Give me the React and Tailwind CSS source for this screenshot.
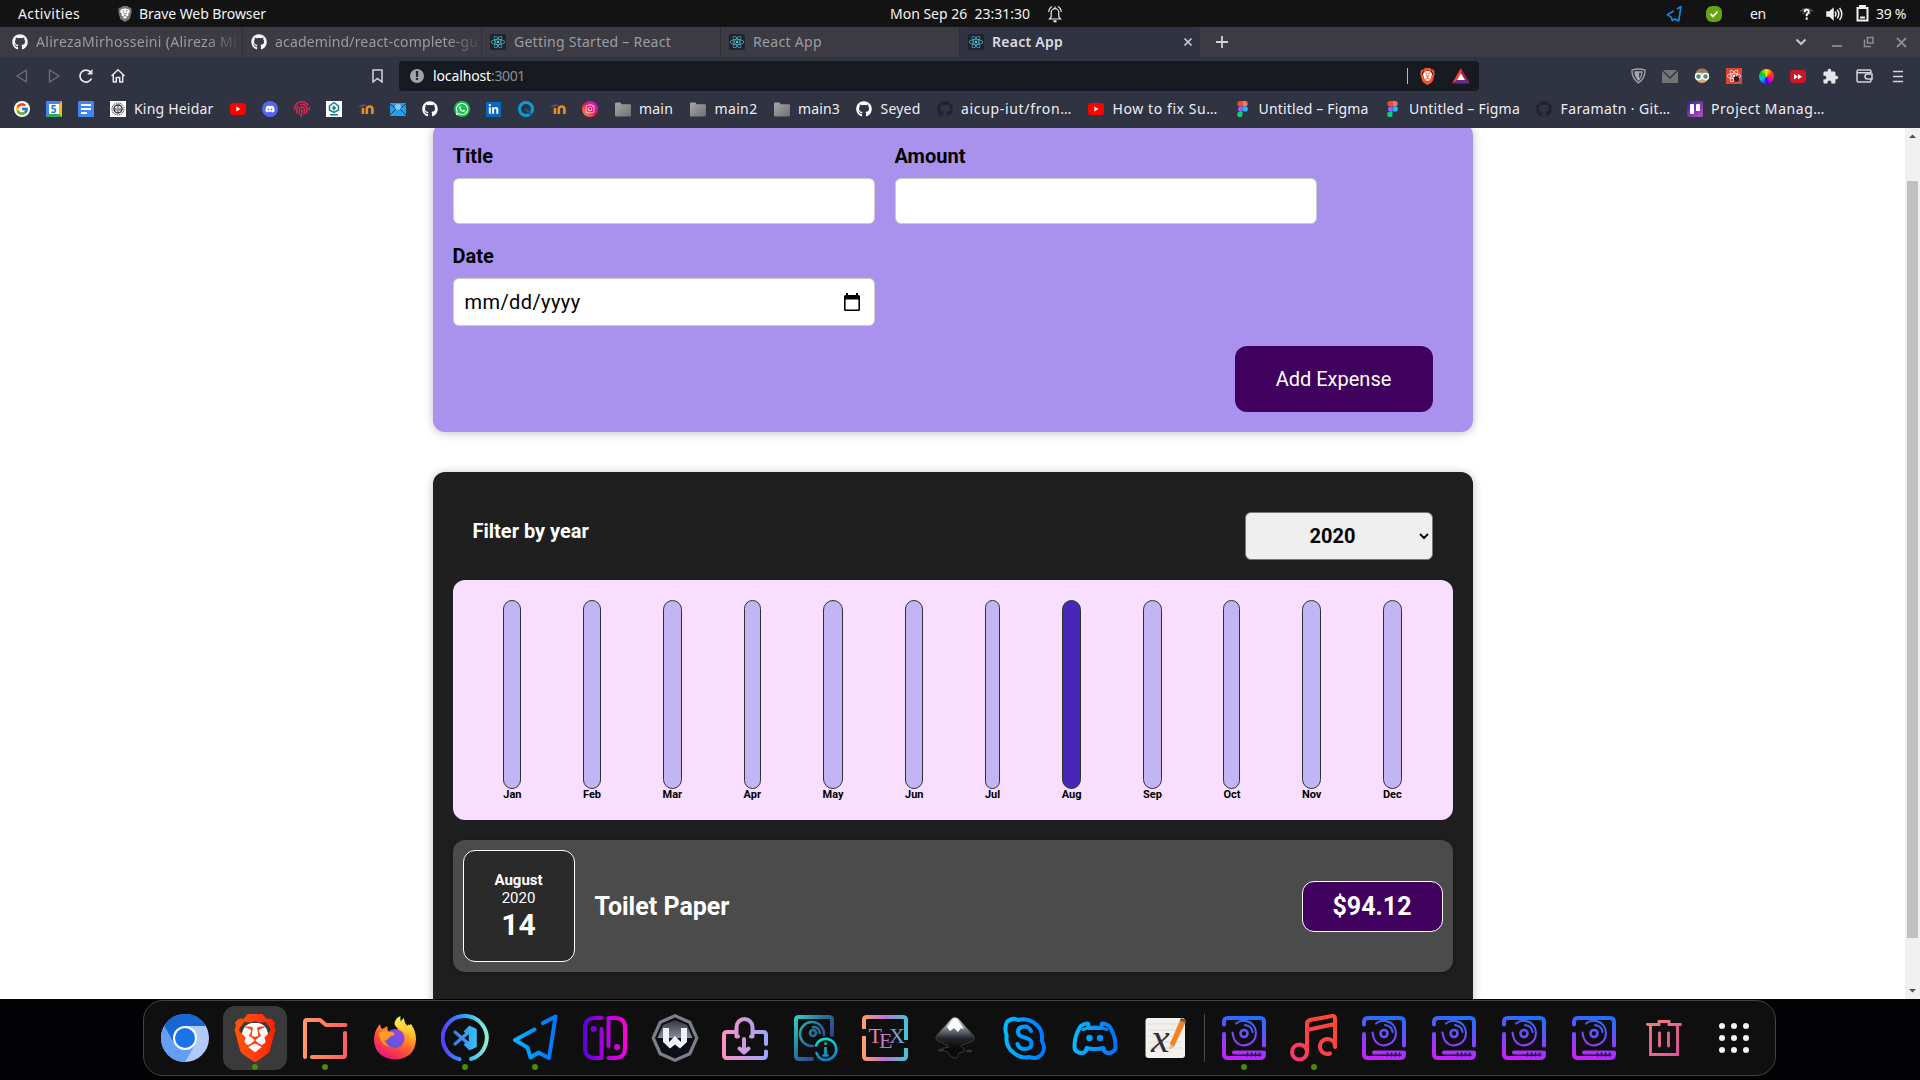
import React, { useLayoutEffect, useRef } from "react";
import {
  FaGithub, FaReact, FaDiscord, FaWhatsapp, FaLinkedinIn, FaInstagram,
  FaFingerprint,
} from "react-icons/fa";
import { MdExtension } from "react-icons/md";
import { FcGoogle } from "react-icons/fc";
import { SiBrave } from "react-icons/si";

const UI = "font-['Noto_Sans',sans-serif] text-[14px] leading-5";

/* Single-line text that spreads its letters to fill a given width. */
function Fit({ w, className = "", children }) {
  const ref = useRef(null);
  useLayoutEffect(() => {
    const el = ref.current;
    el.style.letterSpacing = "0px";
    const natural = el.getBoundingClientRect().width;
    el.style.letterSpacing = (w - natural) / el.textContent.length + "px";
  }, [w]);
  return (
    <span className={"block shrink-0 whitespace-pre " + className} style={{ width: w }}>
      <span ref={ref} className="inline-block">{children}</span>
    </span>
  );
}

function Cell({ className = "w-8", children }) {
  return <div className={"flex shrink-0 items-center justify-center " + className}>{children}</div>;
}

/* ---------- shared gradients ---------- */
function Defs() {
  const g = (id, x1, y1, x2, y2, stops) => (
    <linearGradient id={id} gradientUnits="userSpaceOnUse" x1={x1} y1={y1} x2={x2} y2={y2}>
      {stops.map(([o, c]) => <stop key={o} offset={o} stopColor={c} />)}
    </linearGradient>
  );
  return (
    <svg className="absolute h-0 w-0">
      <defs>
        {g("folder", 2, 0, 46, 0, [[0, "#ff9966"], [1, "#ff5e62"]])}
        {g("code", 2, 0, 46, 0, [[0, "#5a3fff"], [0.5, "#20aaff"], [1, "#8ff2cf"]])}
        {g("ribbon", 12, 0, 37, 0, [[0, "#3f74f0"], [1, "#35c8f8"]])}
        {g("plane", 2, 0, 40, 0, [[0, "#00b8ff"], [1, "#0078ff"]])}
        {g("joy", 2, 0, 46, 0, [[0, "#5a00dc"], [1, "#ff00e0"]])}
        {g("bag", 2, 0, 46, 0, [[0, "#ff8fc0"], [1, "#9aa8ff"]])}
        {g("info", 2, 2, 42, 30, [[0, "#30d8d0"], [0.5, "#28789a"], [1, "#33318a"]])}
        {g("infoI", 30, 24, 34, 46, [[0, "#10e0c8"], [1, "#1080c8"]])}
        {g("tex", 2, 0, 46, 0, [[0, "#ffa060"], [0.5, "#c070d8"], [1, "#40c8d8"]])}
        {g("blue", 2, 0, 46, 0, [[0, "#00bfff"], [1, "#0070ff"]])}
        {g("drive", 30, 2, 20, 46, [[0, "#2070ff"], [0.5, "#7a48ff"], [1, "#c820ff"]])}
        {g("music", 2, 40, 46, 2, [[0, "#ff3868"], [1, "#ff4a28"]])}
        {g("trash", 6, 8, 42, 40, [[0, "#f08080"], [1, "#e850a0"]])}
        {g("ink", 24, 2, 24, 34, [[0, "#ffffff"], [0.35, "#8a8e98"], [0.7, "#22252c"], [1, "#0a0a0a"]])}
        {g("hex", 24, 6, 24, 24, [[0, "#333640"], [1, "#8a8c96"]])}
        {g("bravefill", 2, 0, 22, 0, [[0, "#ff5500"], [0.5, "#ff4010"], [1, "#ff2000"]])}
        {g("fox", 38, 6, 14, 46, [[0, "#fff04a"], [0.3, "#ffa62a"], [0.65, "#ff4a38"], [1, "#e6108a"]])}
        {g("foxtail", 34, 3, 34, 34, [[0, "#fff45a"], [0.5, "#ffc830"], [1, "#ff8a20"]])}
        {g("foxhead", 6, 14, 24, 30, [[0, "#ffb030"], [1, "#ff8020"]])}
        {g("orb", 30, 14, 18, 32, [[0, "#a040e8"], [1, "#5a58d8"]])}
        <linearGradient id="foldergray" x1="0" y1="0" x2="1" y2="1">
          <stop offset="0" stopColor="#a8a8aa" /><stop offset="1" stopColor="#707074" />
        </linearGradient>
      </defs>
    </svg>
  );
}

function Brave({ className, fill = "#fb542b" }) {
  return (
    <div className={"relative " + className}>
      <div className="absolute inset-x-[22%] inset-y-[18%] rounded-[40%] bg-white" />
      <SiBrave className="relative h-full w-full" fill={fill} />
    </div>
  );
}

/* ---------- GNOME top bar ---------- */
function TopBar() {
  return (
    <div className={"flex h-[27px] shrink-0 items-center bg-[#131313] text-[#f2f2f2] " + UI}>
      <Fit w={62} className="ml-[18px]">Activities</Fit>
      <div className="relative ml-[37px] h-[18px] w-[16px]">
        <div className="absolute inset-x-[3px] inset-y-[3px] rounded bg-white" />
        <SiBrave className="relative h-[18px] w-[16px]" fill="#77777a" />
      </div>
      <Fit w={127} className="ml-[6px]">Brave Web Browser</Fit>
      <Fit w={140} className="ml-[624px]">Mon Sep 26  23:31:30</Fit>
      <svg className="ml-[17px]" width="16" height="18" viewBox="0 0 16 18" fill="none" stroke="#eee" strokeWidth="1.2">
        <path d="M2.500 14h11l-1.700-2V7.500a3.800 3.800 0 0 0-7.600 0V12zM1.800 7q.2-4 3.400-5.500M14.200 7q-.2-4-3.400-5.500M8 1.500v2" />
        <path d="M6.500 16.300h3" strokeWidth="2" />
      </svg>
      <svg className="ml-[603px]" width="16" height="16" viewBox="0 0 48 48" fill="none" stroke="#1685ea" strokeWidth="5" strokeLinejoin="round">
        <path d="M33 9L45 2 38 45 27 39 19 44 16 34 4 26 23 15" />
      </svg>
      <div className="ml-[24px] flex h-4 w-4 items-center justify-center rounded-[6px] bg-[#63a411]">
        <svg width="10" height="10" viewBox="0 0 10 10" fill="none" stroke="#fff" strokeWidth="1.8"><path d="M1.5 5l2.5 2.5 4.500-5" /></svg>
      </div>
      <Fit w={16} className="ml-[28px]">en</Fit>
      <svg className="ml-[33px]" width="15" height="14" viewBox="0 0 15 14" fill="none">
        <path d="M1 4.500Q7.500-1.500 14 4.500M3.500 7Q7.500 3 11.500 7" stroke="#555" strokeWidth="1.6" />
        <path d="M5.500 5q0-2.200 2.200-2.200T9.800 4.900q0 1.400-2.100 2.600v1.700M7.700 10.500v2.200" stroke="#fff" strokeWidth="1.9" />
      </svg>
      <svg className="ml-[12px]" width="17" height="14" viewBox="0 0 17 14" fill="none" stroke="#eee" strokeWidth="1.5">
        <path d="M1 5h2.500L7 2v10L3.500 9H1z" fill="#eee" /><path d="M9 4.500q1.800 2.500 0 5M11.300 2.800q3 4.200 0 8.400M13.600 1q4.400 6 0 12" />
      </svg>
      <svg className="ml-[13px]" width="13" height="17" viewBox="0 0 13 17" fill="none" stroke="#f2f2f2" strokeWidth="2">
        <path d="M4 2.500V1h5v1.500M1.500 3h10v12.500h-10zM4 12.500h5" />
      </svg>
      <Fit w={30} className="ml-[7px]">39 %</Fit>
    </div>
  );
}

/* ---------- Browser tabs ---------- */
const tabs = [
  { icon: "gh", label: "AlirezaMirhosseini (Alireza Mi", w: 201, fade: true },
  { icon: "gh", label: "academind/react-complete-gu", w: 203, fade: true },
  { icon: "react", label: "Getting Started – React", w: 157 },
  { icon: "react", label: "React App", w: 69 },
  { icon: "react", label: "React App", w: 71, active: true },
];

function TabBar() {
  return (
    <div className={"flex h-[30px] shrink-0 bg-[#3c3b43] pl-1 " + UI}>
      {tabs.map((t, i) => (
        <div
          key={i}
          className={
            t.active
              ? "flex w-[240px] items-center rounded-t-[4px] bg-[#303342] pl-2 font-semibold text-[#dcdce2]"
              : "flex w-[239px] items-center border-r border-[#302f35] pl-2 text-[#9c9ba3]"
          }
        >
          {t.icon === "gh" ? (
            <FaGithub className="h-4 w-4 shrink-0 text-[#f4f4f6]" />
          ) : (
            <div className="flex h-4 w-4 shrink-0 items-center justify-center rounded-[2px] bg-[#20232a]">
              <FaReact className="h-[14px] w-[14px] text-[#53c1de]" />
            </div>
          )}
          <div className={t.fade ? "ml-2 [mask-image:linear-gradient(to_right,black_85%,rgba(0,0,0,0.12))]" : "ml-2"}>
            <Fit w={t.w}>{t.label}</Fit>
          </div>
          {t.active && (
            <svg className="ml-[120px]" width="10" height="10" viewBox="0 0 10 10" stroke="#c8c8cf" strokeWidth="1.7"><path d="M1.500 1.500l7 7M8.500 1.500l-7 7" /></svg>
          )}
        </div>
      ))}
      <div className="flex flex-1 items-center">
        <svg className="ml-[16px]" width="12" height="12" viewBox="0 0 12 12" stroke="#d2d2d8" strokeWidth="1.8"><path d="M6 0v12M0 6h12" /></svg>
        <svg className="ml-[567px]" width="12" height="8" viewBox="0 0 12 8" fill="none" stroke="#c8c8cc" strokeWidth="2"><path d="M1.500 1.500L6 6l4.500-4.500" /></svg>
        <svg className="ml-[24px]" width="12" height="10" viewBox="0 0 12 10" stroke="#8c8b91" strokeWidth="1.800"><path d="M1 9h10" /></svg>
        <svg className="ml-[20px]" width="12" height="12" viewBox="0 0 12 12" fill="none" stroke="#8c8b91" strokeWidth="1.500"><path d="M4.500 1.500H10v5.500H4.500zM1.500 3.500v7h6.500" /></svg>
        <svg className="ml-[21px]" width="11" height="11" viewBox="0 0 11 11" stroke="#8c8b91" strokeWidth="1.800"><path d="M1 1l9 9M10 1l-9 9" /></svg>
      </div>
    </div>
  );
}

/* ---------- Address bar ---------- */
function Toolbar() {
  return (
    <div className={"flex h-[38px] shrink-0 items-center bg-[#303342] pl-[6px] " + UI}>
      <Cell><svg width="12" height="14" viewBox="0 0 12 14" fill="none" stroke="#6d6f7c" strokeWidth="1.300" strokeLinejoin="round"><path d="M10.500 1v12L1 7z" /></svg></Cell>
      <Cell><svg width="12" height="14" viewBox="0 0 12 14" fill="none" stroke="#6d6f7c" strokeWidth="1.300" strokeLinejoin="round"><path d="M1.500 1v12L11 7z" /></svg></Cell>
      <Cell><svg width="16" height="16" viewBox="0 0 16 16" fill="none" stroke="#e8e8ec" strokeWidth="1.700"><path d="M13.500 10.500a6 6 0 1 1-.8-6.200" /><path d="M14.500 1v5.500H9z" fill="#e8e8ec" stroke="none" /></svg></Cell>
      <Cell><svg width="16" height="16" viewBox="0 0 16 16" fill="none" stroke="#e8e8ec" strokeWidth="1.500" strokeLinejoin="round"><path d="M1.500 8L8 1.800 14.500 8M3.300 7v7h3V9.500h3.400V14h3V7" /></svg></Cell>
      <div className="ml-[226px] w-[39px]">
        <svg className="ml-[12px]" width="11" height="14" viewBox="0 0 11 14" fill="none" stroke="#d2d2d8" strokeWidth="1.500"><path d="M1 1h9v12L5.500 9.500 1 13z" /></svg>
      </div>
      <div className="flex h-[30px] w-[1080px] shrink-0 items-center rounded bg-[#181a21]">
        <div className="ml-[11px] flex h-[14px] w-[14px] items-center justify-center rounded-full bg-[#a2a4ad] text-[12px] font-extrabold text-[#181a21]">!</div>
        <Fit w={58} className="ml-[9px] text-white">localhost</Fit>
        <Fit w={34} className="text-[#8b8d98]">:3001</Fit>
        <div className="ml-[882px] h-4 w-px bg-[#b8b9be]" />
        <Brave className="ml-[11px] h-[17px] w-[17px]" />
        <svg className="ml-[16px]" width="18" height="16" viewBox="0 0 18 16"><path d="M9 0L0 15.500 9 10z" fill="#ff4724" /><path d="M9 0l9 15.500L9 9z" fill="#9e1f63" /><path d="M0 15.500h18L9 9z" fill="#662d91" /><path d="M9 5.500L5 12h8z" fill="#fff" /></svg>
      </div>
      <div className="ml-[143px] flex">
        <Cell><svg width="15" height="16" viewBox="0 0 15 16" fill="none" stroke="#a4a6ae" strokeWidth="1.300"><path d="M1 2q6.500-2 13 0 .5 8-6.500 13Q.5 10 1 2z" /><path d="M4 4h3.500v8Q4 8.500 4 4z" fill="#a4a6ae" /><path d="M7.500 4H11q0 4.500-3.500 8" /></svg></Cell>
        <Cell><svg width="16" height="13" viewBox="0 0 16 13"><path d="M0 0h16v13H0z" fill="#747474" /><path d="M0 0l8 8 8-8" fill="none" stroke="#303342" strokeWidth="1.300" /></svg></Cell>
        <Cell><svg width="16" height="16" viewBox="0 0 16 16"><circle cx="8" cy="8" r="7" fill="#d9a878" /><path d="M1.500 6Q3 0 8 .5 13 0 14.500 6 8 3 1.500 6z" fill="#9a7a58" /><circle cx="4.500" cy="8.500" r="3" fill="#4a8a90" stroke="#fff" strokeWidth="1.400" /><circle cx="11.500" cy="8.500" r="3" fill="#4a8a90" stroke="#fff" strokeWidth="1.400" /></svg></Cell>
        <Cell><div className="relative flex h-4 w-4 items-center justify-center bg-[#e04434]"><FaReact className="h-[14px] w-[14px] text-white" /><div className="absolute bottom-[2px] right-[3px] h-[6px] w-[5px] rounded-full bg-[#222]" /></div></Cell>
        <Cell><div className="h-[15px] w-[15px] rounded-full bg-[conic-gradient(#ffe000,#ff4000,#ff00a0,#4000ff,#00c0ff,#00d020,#ffe000)]" /></Cell>
        <Cell><svg width="16" height="13" viewBox="0 0 16 13"><rect width="16" height="13" rx="3.500" fill="#cc1626" /><path d="M4 4l4 2.700L4 9.400zM8 4l4 2.700-4 2.700z" fill="#fff" /></svg></Cell>
        <Cell><MdExtension className="h-[17px] w-[17px] text-[#e6e6ea]" /></Cell>
        <Cell className="w-[36px]"><svg width="17" height="14" viewBox="0 0 17 14" fill="none" stroke="#d4d4da" strokeWidth="1.500"><path d="M15 4V2.500Q15 1 13.500 1h-11Q1 1 1 2.500v9Q1 13 2.500 13h11q1.500 0 1.500-1.500V10M1 3.800h14" /><path d="M16 5h-4.500a2.200 2.200 0 0 0 0 5H16z" /></svg></Cell>
        <Cell><svg width="10" height="13" viewBox="0 0 10 13" stroke="#d4d4da" strokeWidth="1.500"><path d="M0 1.500h10M0 6.500h10M0 11.500h10" /></svg></Cell>
      </div>
    </div>
  );
}

/* ---------- Bookmarks ---------- */
const Moodle = () => (
  <svg width="16" height="12" viewBox="0 0 16 12" fill="none" stroke="#f08a24" strokeWidth="2.600"><path d="M5 11V5M8.800 11V6q0-2.500 2.700-2.500T14.400 6v5" /><path d="M0 3.500L5 1l3.500 1L4 4.500z" fill="#555" stroke="none" /></svg>
);
const Folder = () => (
  <svg width="17" height="15" viewBox="0 0 17 15"><path d="M0 1.500Q0 0 1.500 0H6l1 2h9q1 0 1 1v10.500q0 1.500-1.500 1.500h-14Q0 15 0 13.500z" fill="url(#foldergray)" /></svg>
);
const Yt = () => (
  <svg width="16" height="12" viewBox="0 0 16 12"><rect width="16" height="12" rx="3" fill="#f00" /><path d="M6.300 3.400l4.200 2.600-4.200 2.600z" fill="#fff" /></svg>
);
const Fig = () => (
  <svg width="11" height="16" viewBox="0 0 11 16"><path d="M5.500 0H3a2.700 2.700 0 0 0 0 5.400h2.500z" fill="#f24e1e" /><path d="M5.500 0H8a2.700 2.700 0 0 1 0 5.400H5.500z" fill="#ff7262" /><path d="M5.500 5.400H3a2.700 2.700 0 0 0 0 5.300h2.500z" fill="#a259ff" /><circle cx="8.200" cy="8" r="2.700" fill="#1abcfe" /><path d="M5.500 10.700H3a2.650 2.650 0 1 0 2.500 2.600z" fill="#0acf83" /></svg>
);
const bookmarks = [
  { i: <div className="flex h-4 w-4 items-center justify-center rounded-full bg-white"><FcGoogle className="h-[14px] w-[14px]" /></div> },
  { i: <div className="flex h-4 w-4 items-center justify-center border-[3px] border-b-[#34a853] border-l-[#4285f4] border-r-[#fbbc04] border-t-[#4285f4] bg-white text-[10px] font-bold leading-none text-[#1a73e8]">5</div> },
  { i: <div className="flex h-4 w-4 flex-col justify-center gap-[2px] rounded-[1px] bg-[#4285f4] pl-[3px]"><div className="h-[2px] w-[10px] bg-white" /><div className="h-[2px] w-[10px] bg-white" /><div className="h-[2px] w-[6px] bg-white" /></div> },
  { i: <div className="flex h-4 w-4 items-center justify-center bg-white"><svg width="14" height="14" viewBox="0 0 14 14" fill="none" stroke="#333"><circle cx="7" cy="7" r="6" strokeDasharray="1.500 .8" /><circle cx="7" cy="7" r="4" strokeWidth="1.500" /><path d="M7 4v6M5 6v3M9 6v3" /></svg></div>, t: "King Heidar", w: 79.5 },
  { i: <Yt /> },
  { i: <div className="flex h-4 w-4 items-center justify-center rounded-full bg-[#5865f2]"><FaDiscord className="h-[10px] w-[10px] text-white" /></div> },
  { i: <FaFingerprint className="h-4 w-4 text-[#e0264f]" /> },
  { i: <div className="flex h-4 w-4 items-center justify-center bg-white"><svg width="12" height="14" viewBox="0 0 12 14" fill="none" stroke="#17808a" strokeWidth="1.500"><path d="M6 .5L10.500 4v4L6 10.500 1.500 8V4zM4 6h4M6 3.500v5M2 12.800h8" /></svg></div> },
  { i: <Moodle /> },
  { i: <svg width="16" height="13" viewBox="0 0 16 13"><path d="M0 0h16v13H0z" fill="#1da1f2" /><path d="M0 1l8 6 8-6M0 12l6-6M16 12l-6-6" stroke="#303342" strokeWidth="1" fill="none" /><circle cx="8" cy="4" r="3" fill="#8acbf5" /></svg> },
  { i: <FaGithub className="h-4 w-4 text-white" /> },
  { i: <div className="flex h-4 w-4 items-center justify-center rounded-full bg-[#19c24a]"><FaWhatsapp className="h-[14px] w-[14px] text-white" /></div> },
  { i: <div className="flex h-[15px] w-[15px] items-center justify-center bg-[#0a66c2]"><FaLinkedinIn className="h-[11px] w-[11px] text-white" /></div> },
  { i: <svg width="16" height="16" viewBox="0 0 16 16"><circle cx="8" cy="8" r="6.500" fill="none" stroke="#0e9bd2" strokeWidth="3" /><path d="M8 8l5 6" stroke="#0b5f88" strokeWidth="2.500" /></svg> },
  { i: <Moodle /> },
  { i: <div className="flex h-4 w-4 items-center justify-center rounded-full bg-[linear-gradient(45deg,#ffb030,#f5105a_50%,#c020e0)]"><FaInstagram className="h-[10px] w-[10px] text-white" /></div> },
  { i: <Folder />, t: "main", w: 34, pad: true },
  { i: <Folder />, t: "main2", w: 43, pad: true },
  { i: <Folder />, t: "main3", w: 42 },
  { i: <FaGithub className="h-4 w-4 text-white" />, t: "Seyed", w: 40 },
  { i: <FaGithub className="h-4 w-4 text-[#20232b]" />, t: "aicup-iut/fron…", w: 111 },
  { i: <Yt />, t: "How to fix Su…", w: 105.5 },
  { i: <Fig />, t: "Untitled – Figma", w: 110 },
  { i: <Fig />, t: "Untitled – Figma", w: 111 },
  { i: <FaGithub className="h-4 w-4 text-[#20232b]" />, t: "Faramatn · Git…", w: 110 },
  { i: <div className="flex h-4 w-4 justify-center gap-[2px] rounded-[2px] bg-[linear-gradient(135deg,#3020a0,#c050c0)] pt-[3px]"><div className="h-[10px] w-[4px] rounded-[1px] bg-white" /><div className="h-[7px] w-[4px] rounded-[1px] bg-white" /></div>, t: "Project Manag…", w: 114 },
];

function Bookmarks() {
  return (
    <div className={"flex h-[33px] shrink-0 items-center gap-4 bg-[#303342] pb-[5px] pl-[13.500px] text-[#eeeef2] " + UI}>
      {bookmarks.map((b, k) => (
        <div key={k} className={"flex shrink-0 items-center gap-[8.500px] " + (b.pad ? "pl-px" : "")}>
          <Cell className="w-4">{b.i}</Cell>
          {b.t && <Fit w={b.w}>{b.t}</Fit>}
        </div>
      ))}
    </div>
  );
}

/* ---------- Page ---------- */
const card = "mx-auto w-[1040px] rounded-[12px] shadow-[0_1px_10px_rgba(0,0,0,0.25)]";
const field = "flex w-[422px] items-center rounded-[6px] border border-[#ccc] bg-white";
const formLabel = "block h-[39px] pt-1 text-[20px] font-bold leading-[26px]";

function ExpenseForm() {
  return (
    <form className={card + " -mt-[5px] h-[309px] bg-[#a892ee] px-5 pt-4"}>
      <div className="flex flex-wrap gap-x-5">
        <div className="h-[100px]">
          <label className={formLabel}>Title</label>
          <div className={field + " h-[46px]"} />
        </div>
        <div className="h-[100px]">
          <label className={formLabel}>Amount</label>
          <div className={field + " h-[46px]"} />
        </div>
        <div className="h-[107px]">
          <label className={formLabel}>Date</label>
          <div className={field + " h-[48px] justify-between pl-[11px] pr-[13px] text-[20px]"}>
            <Fit w={116}>mm/dd/yyyy</Fit>
            <svg width="18" height="19" viewBox="0 0 18 19"><path d="M3 0h2v2h8V0h2v2h.500Q17 2 17 3.500v13q0 1.500-1.500 1.500h-13Q1 18 1 16.500v-13Q1 2 2.500 2H3zM2.600 6.500v9.900h12.800V6.500z" fillRule="evenodd" /></svg>
          </div>
        </div>
      </div>
      <div className="flex justify-end pr-5">
        <button type="button" className="h-[66px] w-[198px] rounded-[12px] bg-[#40005d] text-[20px] text-white">Add Expense</button>
      </div>
    </form>
  );
}

const months = ["Jan", "Feb", "Mar", "Apr", "May", "Jun", "Jul", "Aug", "Sep", "Oct", "Nov", "Dec"];

function Expenses() {
  return (
    <div className={card + " mt-10 h-[620px] bg-[#1f1f1f] px-5 pt-10 text-white"}>
      <div className="flex h-12 justify-between px-5">
        <label className="pt-[6px] text-[20px] font-bold leading-[26px]">Filter by year</label>
        <div className="flex w-[188px] items-center rounded-[6px] border border-[#767676] bg-[#efefef] text-[20px] font-bold text-black">
          <span className="w-[173px] pl-px text-center">2020</span>
          <svg width="10" height="7" viewBox="0 0 10 7" fill="none" stroke="#111" strokeWidth="2"><path d="M1 1l4 4 4-4" /></svg>
        </div>
      </div>
      <div className="mt-5 flex h-[240px] justify-around rounded-[12px] bg-[#f8dfff] p-5">
        {months.map((m) => (
          <div key={m} className="flex flex-col items-center">
            <div className={"h-[189px] w-full shrink-0 rounded-[12px] border border-[#313131] " + (m === "Aug" ? "bg-[#4826b9]" : "bg-[#c3b4f3]")} />
            <div className="text-center text-[11px] font-bold leading-[12px] text-black">{m}</div>
          </div>
        ))}
      </div>
      <div className="mt-5 flex h-[132px] items-center rounded-[12px] bg-[#4b4b4b] px-[10px] shadow-[0_1px_10px_rgba(0,0,0,0.25)]">
        <div className="flex h-[112px] w-[112px] flex-col items-center justify-center rounded-[12px] border border-white bg-[#2a2a2a] pt-[2px]">
          <div className="text-[15px] font-bold leading-[18px]">August</div>
          <div className="text-[15px] leading-[18px]">2020</div>
          <div className="text-[30px] font-bold leading-[36px]">14</div>
        </div>
        <h2 className="ml-5 flex-1 pt-[2px] text-[25px] font-bold">Toilet Paper</h2>
        <div className="flex h-[51px] w-[141px] items-center justify-center rounded-[12px] border border-white bg-[#40005d] pt-px text-[25px] font-bold">$94.12</div>
      </div>
    </div>
  );
}

function Scrollbar() {
  return (
    <div className="flex w-[15px] shrink-0 flex-col items-center justify-between bg-[#f1f1f1] py-[6px]">
      <svg width="7" height="4" viewBox="0 0 7 4"><path d="M0 4L3.500.5 7 4z" fill="#505050" /></svg>
      <div className="mb-[51px] mt-[43px] w-[11px] flex-1 bg-[#c1c1c1]" />
      <svg width="7" height="4" viewBox="0 0 7 4"><path d="M0 0L3.500 3.500 7 0z" fill="#505050" /></svg>
    </div>
  );
}

/* ---------- Dock ---------- */
function S({ g, sw = 4, children }) {
  return (
    <svg width="48" height="48" viewBox="0 0 48 48" fill="none" stroke={g} strokeWidth={sw} strokeLinecap="round" strokeLinejoin="round">{children}</svg>
  );
}

const Drive = () => (
  <S g="url(#drive)">
    <path d="M4 10.500V8q0-4 4-4h32q4 0 4 4v23.500M4 20v20q0 4 4 4h32q4 0 4-4v-1.500" />
    <path d="M14 38.500h28" />
    <path d="M12.500 18.500Q14 31 24 31.500 35.500 30 36 19 35.500 9 26 7q-6-1-10 2.500" strokeWidth="2" />
    <path d="M25 11q7 1 7.500 7" strokeWidth="2" />
    <circle cx="24" cy="19.500" r="3.500" strokeWidth="2.600" />
    <path d="M27.500 38.500v4M31.500 38.500v4M35.500 38.500v4M39.500 38.500v4" stroke="#2a1040" strokeWidth="1.500" strokeLinecap="butt" />
  </S>
);

const dockIcons = [
  {
    el: (
      <svg width="48" height="48" viewBox="0 0 48 48">
        <circle cx="24" cy="24" r="24" fill="#aecbfa" />
        <path d="M3.200 12A24 24 0 0 0 24 48L34.400 30 24 24 13.600 30z" fill="#669df6" />
        <path d="M3.200 12A24 24 0 0 1 44.800 12H24v12l-10.400 6z" fill="#1967d2" />
        <circle cx="24" cy="24" r="12" fill="#fff" /><circle cx="24" cy="24" r="10" fill="#1a73e8" />
      </svg>
    ),
  },
  { el: <Brave className="h-[48px] w-[48px]" fill="url(#bravefill)" />, dot: true, active: true },
  { el: <S g="url(#folder)"><path d="M4 43V8q0-2 2-2h13l6 5h19.500M44 19v22q0 2-2 2H11" /></S>, dot: true },
  {
    el: (
      <svg width="48" height="48" viewBox="0 0 48 48">
        <path d="M9 10q0 3 2 5 3-1 5-3l1 5q5-1 9 0 2-10 7-13 0 5 4 8l3-2q5 7 5 15Q44 45 24 45.500 4 44 3 26q0-9 6-16z" fill="url(#fox)" />
        <circle cx="24" cy="24.500" r="9.500" fill="url(#orb)" />
        <path d="M29.500 2q-1 7 3 10 4 4 4 9-4-5-8-6-5-2-5-6 1-5 6-7zM37 10q7 8 5 20-3-8-6-12z" fill="url(#foxtail)" />
        <path d="M8 19q5-3 10-1 3-1 6 1.500-1 3-5 3-2 4-6 4 2 4 6 6-9 0-11-13z" fill="url(#foxhead)" />
      </svg>
    ),
  },
  {
    el: (
      <S g="url(#code)"><path d="M18.500 45.300A22 22 0 1 1 30 45" />
        <path d="M14 18l15 13M14 30l15-13" stroke="url(#ribbon)" strokeWidth="3.200" />
        <path d="M28.500 12.500l6.500 3v17l-6.500 3-5-5 5-2.500v-8l-5-2.500z" fill="url(#ribbon)" stroke="url(#ribbon)" strokeWidth="1.500" />
      </S>
    ),
    dot: true,
  },
  { el: <S g="url(#plane)"><path d="M32 9L44.500 2.500 38 44 27.500 38.500 19.500 43.500 16.500 33.500 4 26 23.500 15.500" /></S>, dot: true },
  {
    el: (
      <S g="url(#joy)"><path d="M20.500 4H14Q4 4 4 14v20q0 10 10 10h6.500V15M27.500 32V4H34q10 0 10 10v20q0 10-10 10h-6.500" />
        <circle cx="12.500" cy="15" r="3" fill="url(#joy)" stroke="none" /><circle cx="36" cy="33" r="3" fill="url(#joy)" stroke="none" />
      </S>
    ),
  },
  {
    el: (
      <svg width="48" height="48" viewBox="0 0 48 48">
        <path d="M24 0l16 7 7.500 17L40 41l-16 7-16-7L.5 24 8 7z" fill="#7d7f86" />
        <path d="M24 3.500L37.500 9.500 44 24l-6.500 14.500L24 44.500l-13.500-6L4 24 10.500 9.500z" fill="#0b0e18" />
        <path d="M24 6l12 5 5.500 13h-35L12 11z" fill="url(#hex)" />
        <path d="M12 14h6v14l6-6 6 6V14h6v14l-7 6.500-5-4-5 4-7-6.500z" fill="#eef1fa" />
      </svg>
    ),
  },
  { el: <S g="url(#bag)"><path d="M17 22.500h-1.500V13a8 8 0 0 1 16 0v9.500H30M15 18H6q-3 0-3 3v20q0 3 3 3h36q3 0 3-3v-3.500M32 18h10q3 0 3 3v9M23 25v13M18.500 34.500L23 38.500l4.500-4" /></S> },
  {
    el: (
      <S g="url(#info)"><path d="M41 21V6q0-3-3-3H8Q5 3 5 6v36q0 3 3 3h13" />
        <path d="M22 32a12 12 0 1 1 11-11M22 13q6 0 7 6" strokeWidth="2.600" /><circle cx="22" cy="19" r="3" strokeWidth="2.600" />
        <path d="M25 31.500a10.500 10.500 0 1 1 3 12M25.500 39l2 4" stroke="url(#infoI)" strokeWidth="2.600" />
        <path d="M34.500 34v7M34.500 29.500v.3M32.500 41.500h4" stroke="url(#infoI)" strokeWidth="2.600" />
      </S>
    ),
  },
  {
    el: (
      <S g="url(#tex)"><path d="M3 15V6q0-3 3-3h36q3 0 3 3v20M3 22v20q0 3 3 3h36q3 0 3-3v-8" strokeLinecap="butt" />
        <g fill="url(#tex)" stroke="none" fontFamily="Liberation Serif, serif"><text x="7.500" y="29" fontSize="22">T</text><text x="18" y="34" fontSize="22">E</text><text x="28" y="29" fontSize="22" textLength="15">X</text></g>
      </S>
    ),
  },
  {
    el: (
      <svg width="48" height="48" viewBox="0 0 48 48">
        <path d="M24 3q2 0 4 2l15 17q2 4-3 6l-9 3q-3 1 1 3 3 2 0 4-6 1-5 3 1 3-3 3-5-1-6-4 0-2-5-3-4-2 0-3l5-1-8-5q-6-1-5-6L20 5q2-2 4-2z" fill="url(#ink)" stroke="#3a3a3a" />
        <path d="M24 4q-3 2-8 9l3 4 4-3 4 4 3-4 3 1q-6-9-9-11z" fill="#fff" />
        <ellipse cx="10" cy="36" rx="3" ry="1.500" fill="#333" /><ellipse cx="38" cy="37" rx="3" ry="1.500" fill="#333" />
      </svg>
    ),
  },
  { el: <S g="url(#blue)"><path d="M5.500 21Q3 13 6 8q5-5 11-2 8-2 15 2 8 5 9 13 0 4 0 6 4 7 0 13-5 6-12 3-9 2-16-4-7-5-7.500-13z" /><path d="M30 17q-2-4.500-6.500-4.500-6.500 0-6.500 5.500 0 4 6.500 5.500 7 1.500 7 6 0 5.500-7 5.500-5.500 0-7-5" strokeWidth="4" /></S> },
  {
    el: (
      <S g="url(#blue)"><path d="M18 14h12M18 14l-1-4.500Q11 10 9 13 3 23 3.500 34q1 5 8 5 4-1 4-5 8 2 17 0 0 4 4 5 7 0 8-5 .5-11-5.500-21-2-3-8-3.500l-1 4.500" />
        <path d="M12 15.500q6-2.500 12-2.500t12 2.500" strokeWidth="3" /><circle cx="18.500" cy="24" r="3.200" fill="url(#blue)" stroke="none" /><circle cx="29" cy="24" r="3.200" fill="url(#blue)" stroke="none" />
      </S>
    ),
  },
  {
    el: (
      <svg width="48" height="48" viewBox="0 0 48 48">
        <rect x="4.500" y="4" width="39.500" height="40" rx="3" fill="#f2f1ee" />
        <path d="M7 10h34M7 16h34M7 22h34M7 28h34M7 34h34" stroke="#dddcd8" strokeWidth="1" />
        <text x="10" y="38" fontFamily="Liberation Serif, serif" fontStyle="italic" fontSize="42" fill="#2e2f3a">x</text>
        <path d="M39.500 5l5.500 2.500-12 25-4.500 3 .5-6z" fill="#f58220" /><path d="M29 30l3.500 2-4 4z" fill="#e8c49a" /><path d="M40 4l5.500 2.500-1 2-5.500-2z" fill="#555" />
      </svg>
    ),
  },
  { sep: true },
  { el: <Drive />, dot: true },
  { el: <S g="url(#music)"><circle cx="9.500" cy="38" r="7.500" /><path d="M17 38V10q0-3 3-4l22-4q3-.5 3 3v28M17 16l28-6M40 39.500a7.500 7.500 0 1 1 5-7" /></S>, dot: true },
  { el: <Drive /> }, { el: <Drive /> }, { el: <Drive /> }, { el: <Drive /> },
  { el: <S g="url(#trash)" sw={2.800}><path d="M7.500 10.500h11.500V7.500h10v3h11.500M10.500 11v29.500h27V11M19.500 19v13M28.500 19v13" strokeLinejoin="miter" /></S> },
  {
    el: (
      <svg width="48" height="48" viewBox="0 0 48 48" fill="#f2f2f2">
        {[12, 24, 36].map((y) => [12, 24, 36].map((x) => <circle key={x + "-" + y} cx={x} cy={y} r="3" />))}
      </svg>
    ),
  },
];

function Dock() {
  return (
    <div className="flex h-[81px] shrink-0 bg-[#020204] pl-[143px] pt-px">
      <div className="flex h-[76px] w-[1633px] items-start rounded-[20px] border border-[#434343] bg-[#0f0f0f] pl-[6px] pt-[5px]">
        {dockIcons.map((d, k) =>
          d.sep ? (
            <div key={k} className="ml-[4px] mr-[4px] mt-[8px] h-12 w-px bg-[#4a4a4a]" />
          ) : (
            <div key={k} className={"relative mx-[3px] flex h-16 w-16 shrink-0 items-center justify-center rounded-[12px] " + (d.active ? "bg-[#3a3a3a]" : "")}>
              {d.el}
              {d.dot && <div className="absolute bottom-0 left-[29px] h-[6px] w-[6px] rounded-full bg-[#4a8a04]" />}
            </div>
          )
        )}
      </div>
    </div>
  );
}

export default function App() {
  return (
    <div className="flex h-[1080px] w-[1920px] flex-col overflow-hidden bg-white">
      <Defs />
      <TopBar />
      <TabBar />
      <Toolbar />
      <Bookmarks />
      <div className="flex h-[871px] shrink-0 overflow-hidden font-['Roboto',sans-serif] text-black">
        <div className="h-full flex-1 overflow-hidden">
          <div className="flow-root">
            <ExpenseForm />
            <Expenses />
          </div>
        </div>
        <Scrollbar />
      </div>
      <Dock />
    </div>
  );
}
